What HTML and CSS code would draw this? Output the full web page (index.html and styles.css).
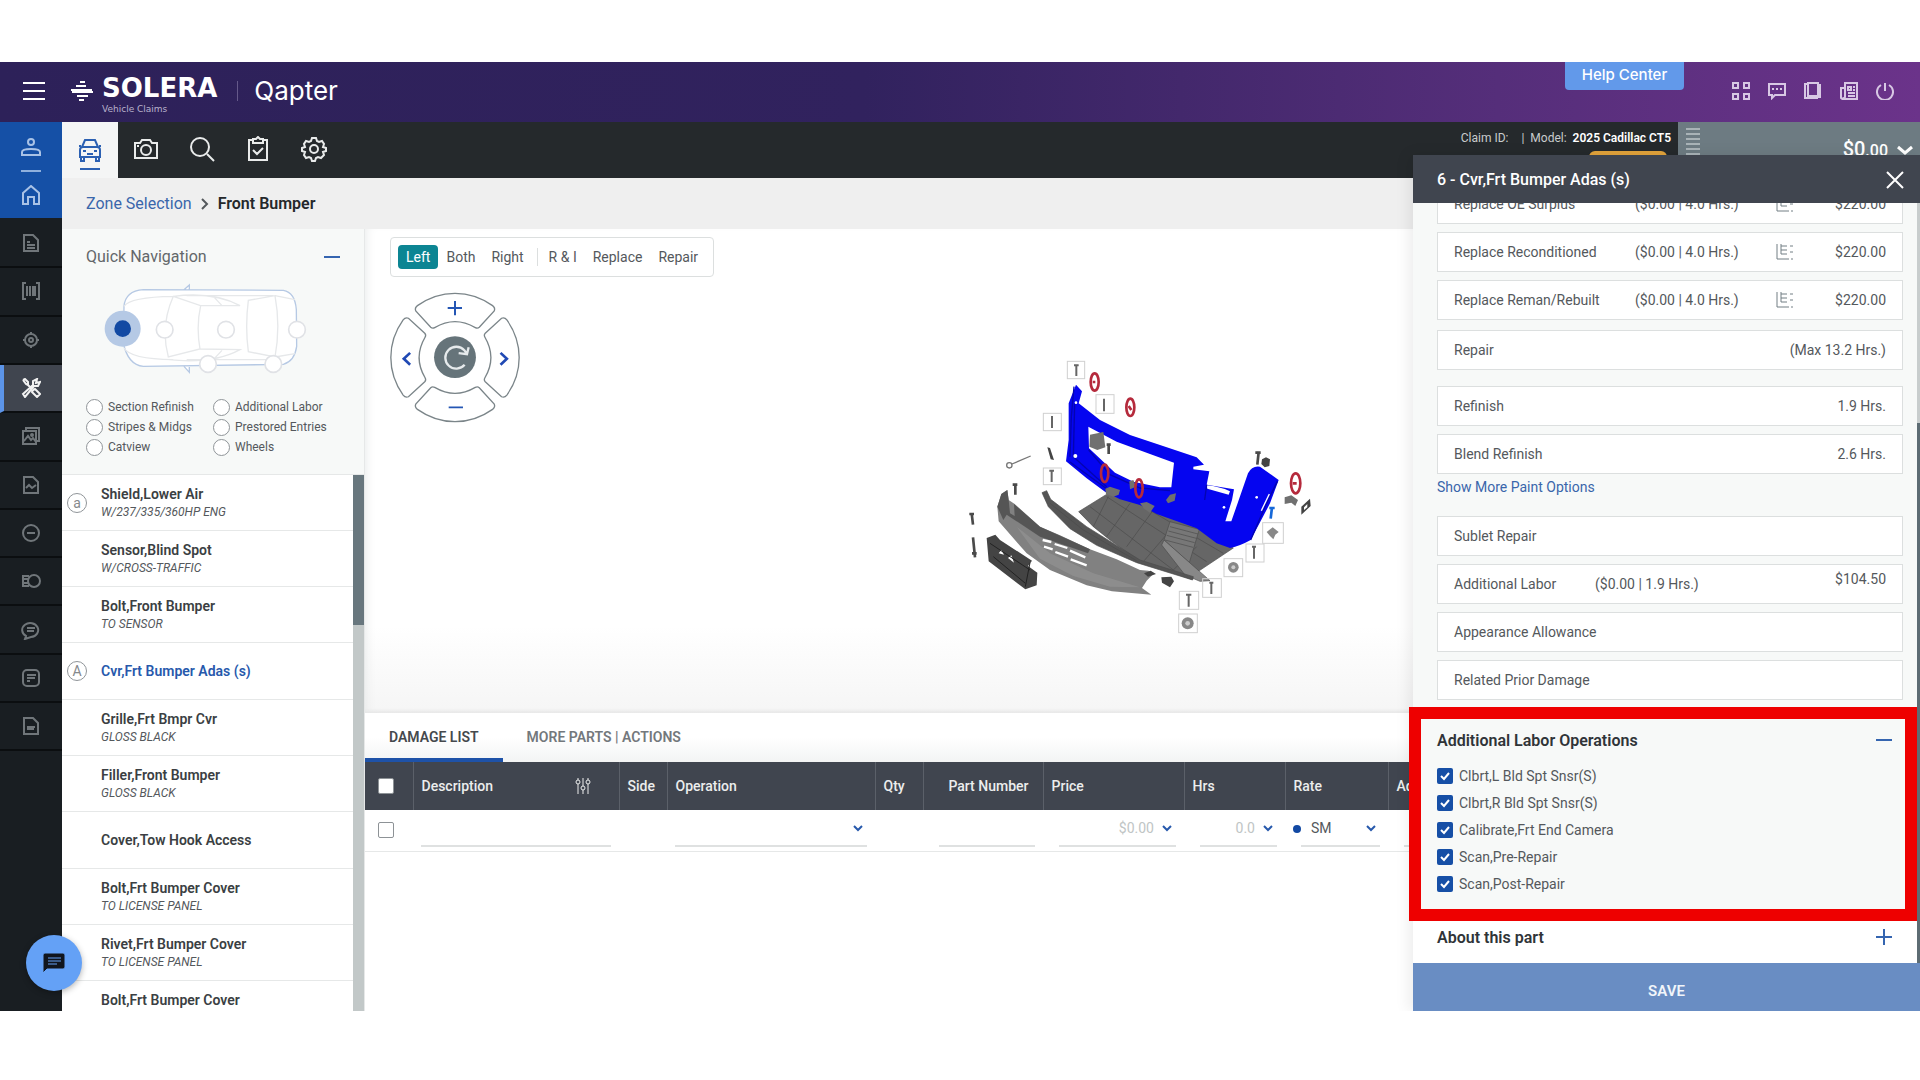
FILE: index.html
```html
<!DOCTYPE html>
<html lang="en">
<head>
    <meta charset="UTF-8">
    <meta name="viewport" content="width=device-width, initial-scale=1.0">
    <title>Solera Qapter - Front Bumper</title>
    <link rel="stylesheet" href="styles.css">
</head>
<body>
<div class="app">
    <header class="topbar">
        <button class="icon-btn menu-btn" aria-label="Menu">
            <svg width="24" height="20" viewBox="0 0 24 20"><path d="M1 2H23M1 10H23M1 18H23"/></svg>
        </button>
        <a class="brand" href="#">
            <svg class="brand-mark" width="24" height="20" viewBox="0 0 24 20"><path d="M10 1h5M6 5h10M1 9h21M2 11h21M7 15h11M9 19h5"/></svg>
            <span class="brand-name"><span>SOLERA</span><small>Vehicle Claims</small></span>
            <span class="brand-product">Qapter</span>
        </a>
        <a class="help-center" href="#">Help Center</a>
        <nav class="top-icons">
            <button class="icon-btn" aria-label="Apps"><svg width="18" height="18" viewBox="0 0 18 18"><path d="M1 1h5v5H1zM12 1h5v5h-5zM1 12h5v5H1zM12 12h5v5h-5z"/></svg></button>
            <button class="icon-btn" aria-label="Messages"><svg width="18" height="18" viewBox="0 0 18 18"><path d="M1 2h16v11H7l-3 3v-3H1zM4 7h2M8 7h2M12 7h2"/></svg></button>
            <button class="icon-btn" aria-label="Library"><svg width="18" height="18" viewBox="0 0 18 18"><path d="M4 1h10v13H4zM4 2H1v14h12v-2M14 3h2v12h-3"/></svg></button>
            <button class="icon-btn" aria-label="News"><svg width="18" height="18" viewBox="0 0 18 18"><path d="M5 1h12v16H3l2-2zM5 6H1v10l2 1M8 5h3v3H8zM13 5h2M13 8h2M8 11h7M8 14h7"/></svg></button>
            <button class="icon-btn" aria-label="Log out"><svg width="18" height="18" viewBox="0 0 18 18"><path d="M9 1V9M5 3A8 8 0 1 0 13 3"/></svg></button>
        </nav>
    </header>

    <div class="workspace">
        <aside class="rail">
            <div class="rail-head">
                <a href="#" aria-label="Profile"><svg width="20" height="20" viewBox="0 0 20 20"><circle cx="10" cy="5" r="3"/><path d="M1 18v-3q0-3 9-3t9 3v3z"/></svg></a>
                <span class="rail-line"></span>
                <a href="#" aria-label="Home"><svg width="20" height="20" viewBox="0 0 20 20"><path d="M2 8L10 1l8 7v11h-5v-7H7v7H2z"/></svg></a>
            </div>
            <nav class="rail-list">
                <a href="#" aria-label="Document"><svg width="18" height="20" viewBox="0 0 18 20"><path d="M2 2h9l5 5v11H2zM5 9h3M5 12h8M5 15h8"/></svg></a>
                <a href="#" aria-label="VIN"><svg width="20" height="20" viewBox="0 0 20 20"><path d="M5 2H2v16h3M15 2h3v16h-3M6 5v10M9 5v10M12 5v10M14 5v10"/></svg></a>
                <a href="#" aria-label="Target"><svg width="18" height="18" viewBox="0 0 18 18"><circle cx="9" cy="9" r="6"/><circle cx="9" cy="9" r="2"/><path d="M9 1v3M9 14v3M1 9h3M14 9h3"/></svg></a>
                <a href="#" class="active" aria-label="Damage capture"><svg width="20" height="20" viewBox="0 0 20 20"><path d="M2 2l2-1 3 3v3l4 4M2 2l3 4 2 1M12 12l2-1 5 5-3 3-5-5 1-2M2 16L12 7V3l4-2-1 4 4-1-2 4h-4L4 19z"/></svg></a>
                <a href="#" aria-label="Images"><svg width="20" height="20" viewBox="0 0 20 20"><path d="M2 5h13v13H2zM5 5V2h13v13h-3M3 15l4-5 3 4 2-2 3 4"/><circle cx="11" cy="9" r="1"/></svg></a>
                <a href="#" aria-label="Report"><svg width="18" height="20" viewBox="0 0 18 20"><path d="M2 2h9l5 5v11H2zM4 13l3-3 3 3 4-3"/></svg></a>
                <a href="#" aria-label="Exclusions"><svg width="20" height="20" viewBox="0 0 20 20"><circle cx="10" cy="10" r="8"/><path d="M6 10h8"/></svg></a>
                <a href="#" aria-label="Costs"><svg width="20" height="20" viewBox="0 0 20 20"><circle cx="13" cy="10" r="6"/><path d="M8 5H2v10h6M2 8h5M2 12h5"/></svg></a>
                <a href="#" aria-label="Comments"><svg width="20" height="20" viewBox="0 0 20 20"><path d="M5 16a8 7 0 1 1 5 1l-6 2zM6 8h8M6 11h7"/></svg></a>
                <a href="#" aria-label="Notes"><svg width="20" height="20" viewBox="0 0 20 20"><rect x="2" y="2" width="16" height="16" rx="4"/><path d="M6 7h9M6 10h8M6 13h3"/></svg></a>
                <a href="#" aria-label="PDF"><svg width="18" height="20" viewBox="0 0 18 20"><path d="M2 2h9l5 5v11H2zM5 11h8M5 13h7"/></svg></a>
            </nav>
        </aside>

        <div class="content">
            <nav class="toolbar">
                <a class="tool active" href="#" aria-label="Vehicle"><svg width="24" height="24" viewBox="0 0 24 24"><path d="M4 9L7 2h10l3 7M2 12q0-3 3-3h14q3 0 3 3v7H2zM3 19v4h3v-4M18 19v4h3v-4M1 8h2M21 8h2M5 13h3M16 13h3M9 16h6"/></svg></a>
                <a class="tool" href="#" aria-label="Camera"><svg width="26" height="22" viewBox="0 0 26 22"><path d="M2 5h5l2-3h8l2 3h5v15H2z"/><circle cx="13" cy="12" r="5"/><path d="M4 8h2"/></svg></a>
                <a class="tool" href="#" aria-label="Search"><svg width="26" height="26" viewBox="0 0 26 26"><circle cx="11" cy="11" r="9"/><path d="M18 18l7 7"/></svg></a>
                <a class="tool" href="#" aria-label="Checklist"><svg width="22" height="26" viewBox="0 0 22 26"><path d="M6 4H2v20h18V4h-4M6 3h3l2-2 2 2h3v4H6zM6 14l4 4 6-6"/></svg></a>
                <a class="tool" href="#" aria-label="Settings"><svg width="26" height="26" viewBox="0 0 26 26"><path d="M11 2h4l1 3 2 1 3-1 2 3-1 3 3 1v3l-3 1 1 3-3 3-3-1-2 1-1 3h-3l-1-3-2-1-3 1-2-3 1-3-3-1v-3l3-1-1-3 2-3 3 1 2-1z"/><circle cx="13" cy="13" r="4"/></svg></a>
                <div class="claim">
                    <p>Claim ID: <span class="claim-model">|&nbsp; Model:</span>&nbsp; <b>2025 Cadillac CT5</b></p>
                    <span class="claim-badge"></span>
                </div>
                <div class="total">
                    <span class="total-grip"></span>
                    <span class="total-value">$0<small>.00</small></span>
                    <svg width="18" height="12" viewBox="0 0 18 12"><path d="M2 3l7 6 7-6"/></svg>
                </div>
            </nav>

            <nav class="breadcrumb">
                <a href="#">Zone Selection</a>
                <svg width="8" height="12" viewBox="0 0 8 12"><path d="M1 1l5 5-5 5"/></svg>
                <span>Front Bumper</span>
            </nav>

            <div class="columns">
                <section class="parts-panel">
                    <div class="quick-nav">
                        <div class="quick-head">
                            <h2>Quick Navigation</h2>
                            <button class="icon-btn toggle" aria-label="Collapse"><svg width="18" height="18" viewBox="0 0 18 18"><path d="M1 9h16"/></svg></button>
                        </div>
                        <!-- top view of the vehicle with its zones -->
                        <svg class="car-map" width="204" height="92" viewBox="312 700 612 276">
                            <path class="car-body" d="M372 770Q376 724 430 720L850 722Q885 728 889 780L890 890Q884 934 850 944L430 950Q384 946 370 880zM552 720l16-14v16M552 950l16 18v-16"/>
                            <path class="car-lines" d="M372 770Q390 742 520 740M372 895Q390 928 520 930M520 740Q480 830 505 922L600 898Q588 830 602 768zM520 740Q640 725 720 768L602 768M505 930Q640 944 720 900L600 898M640 740l26 28M640 930l26-28M745 752Q735 830 745 906L825 922Q842 830 825 738zM825 738l60 12M825 922l60-10M560 738h260M560 930h260"/>
                            <g class="zones"><circle cx="494" cy="840" r="25"/><circle cx="678" cy="840" r="25"/><circle cx="891" cy="840" r="25"/><circle cx="624" cy="943" r="25"/><circle cx="820" cy="943" r="25"/></g>
                            <circle class="zone-halo" cx="368" cy="837" r="54"/>
                            <circle class="zone-dot" cx="368" cy="837" r="25"/>
                        </svg>
                        <div class="quick-options">
                            <label><input type="radio" name="quick"> Section Refinish</label>
                            <label><input type="radio" name="quick"> Additional Labor</label>
                            <label><input type="radio" name="quick"> Stripes &amp; Midgs</label>
                            <label><input type="radio" name="quick"> Prestored Entries</label>
                            <label><input type="radio" name="quick"> Catview</label>
                            <label><input type="radio" name="quick"> Wheels</label>
                        </div>
                    </div>
                    <div class="parts">
                        <ul class="parts-list">
                            <li><span class="mark">a</span><b>Shield,Lower Air</b><i>W/237/335/360HP ENG</i></li>
                            <li><b>Sensor,Blind Spot</b><i>W/CROSS-TRAFFIC</i></li>
                            <li><b>Bolt,Front Bumper</b><i>TO SENSOR</i></li>
                            <li class="single selected"><span class="mark">A</span><b>Cvr,Frt Bumper Adas (s)</b></li>
                            <li><b>Grille,Frt Bmpr Cvr</b><i>GLOSS BLACK</i></li>
                            <li><b>Filler,Front Bumper</b><i>GLOSS BLACK</i></li>
                            <li class="single"><b>Cover,Tow Hook Access</b></li>
                            <li><b>Bolt,Frt Bumper Cover</b><i>TO LICENSE PANEL</i></li>
                            <li><b>Rivet,Frt Bumper Cover</b><i>TO LICENSE PANEL</i></li>
                            <li><b>Bolt,Frt Bumper Cover</b></li>
                        </ul>
                        <div class="parts-scroll"><span></span></div>
                    </div>
                </section>

                <main class="main">
                    <section class="stage">
                        <div class="stage-tools">
                            <div class="segments">
                                <button class="on">Left</button>
                                <button>Both</button>
                                <button>Right</button>
                                <span class="segments-sep"></span>
                                <button>R &amp; I</button>
                                <button>Replace</button>
                                <button>Repair</button>
                            </div>
                            <svg class="dial" width="130" height="131" viewBox="88 216 390 394">
                                <defs><path id="dial-key" d="M165 273Q161 264 170 257Q222 220 283 220Q344 220 396 257Q405 264 401 273L356 322Q351 327 344 323Q283 287 222 323Q215 327 210 322z"/></defs>
                                <g class="dial-keys">
                                    <use href="#dial-key"/>
                                    <use href="#dial-key" transform="rotate(90 283 413)"/>
                                    <use href="#dial-key" transform="rotate(180 283 413)"/>
                                    <use href="#dial-key" transform="rotate(270 283 413)"/>
                                </g>
                                <path class="dial-signs" d="M261 264h43M283 243v43M264 563h43"/>
                                <path class="dial-arrows" d="M148 399l-19 18 19 18M420 399l19 18-19 18"/>
                                <circle class="dial-center" cx="283" cy="412" r="63"/>
                                <path class="dial-turn" d="M312 435A33 33 0 1 1 311 391L319 402M324 382L319 403 294 400"/>
                            </svg>
                        </div>

                        <!-- exploded view of the front bumper -->
                        <svg class="exploded" width="400" height="310" viewBox="0 0 1200 930" role="img" aria-label="Front bumper parts">
                            <g class="tray">
                                <path fill="#666" d="M416 515L508 458 540 466 650 500 780 560 880 624 775 694 740 690 755 718 600 665 510 600 460 560z"/>
                                <path d="M505 470L460 560M570 490L500 590M640 510L560 620M700 560L610 665M770 620L700 690M450 500L700 690M500 470L800 665M560 470L850 640"/>
                                <path fill="#777" d="M690 545L778 568 748 668 672 600z"/>
                                <path d="M690 560l84 22M685 573l84 22M680 586l84 22M675 600l84 22"/>
                                <path fill="#888" d="M672 600L810 722 780 724 735 705 665 615z"/>
                                <path fill="#555" d="M306 458L320 452 332 478 440 560 600 660 760 710 758 720 590 668 470 616 390 566 325 500z"/>
                                <path d="M330 490L430 570 590 662"/>
                            </g>
                            <g class="cover">
                                <path d="M408 134L426 154 416 190 480 240 570 285 660 315 770 352 792 374 760 380 760 388 808 394 800 434 882 448 876 480 856 544 874 544 924 400Q936 376 960 380L1016 420 990 490 932 600Q900 618 870 624L830 610 770 565 650 522 600 495 540 478 495 455 440 415 378 364 386 300 386 190z"/>
                                <path fill="#fff" d="M445 260L530 305 630 342 702 368 694 442 660 442 580 425 525 398 447 325z"/>
                                <path fill="#fff" d="M800 436Q840 440 870 454L866 464 802 446z"/>
                                <path class="shade" d="M404 190L400 350 500 440M446 330L510 404 600 444 690 452M390 366L500 446M800 434L794 480M932 600L975 500 1012 424M402 140l-8 90-4 120"/>
                                <path stroke="#fff" stroke-width="4" d="M988 462l-24 50"/>
                                <g fill="#fff"><circle cx="406" cy="348" r="6"/><circle cx="852" cy="502" r="4"/><circle cx="950" cy="472" r="4"/><circle cx="408" cy="188" r="4"/></g>
                            </g>
                            <g class="valance">
                                <path fill="#818181" d="M172 500L184 462 202 450 206 480 224 492 300 560 360 586 450 628 530 658 600 690 625 692 642 700 620 722 606 744 634 764 516 754 440 736 330 690 260 640 176 544z"/>
                                <path fill="#555" d="M172 500L184 462 202 450 206 480 210 520 224 528 222 492 300 560 450 628 444 640 300 590 200 524 190 540z"/>
                                <path fill="#999" d="M230 560L330 640 460 700 600 742 510 740 400 708 300 656z" opacity=".5"/>
                                <path class="slots" d="M308 600L334 606M344 612L382 624M390 632L436 652M312 620L338 628M346 636L384 650M392 658L440 676"/>
                                <path fill="#444" d="M140 594L166 584 180 600 276 662 264 678 292 698 290 736 256 748 146 664z"/>
                                <path fill="#fff" d="M176 640l8-10 8 14zM204 654l10-8 8 22z"/>
                                <path class="shade" d="M150 610L270 690M160 650L256 730M270 668L256 740"/>
                                <path fill="#444" d="M664 712l30-2 8 14-12 18-24-14zM612 700l20-8 16 10-24 8z"/>
                            </g>
                            <g class="clips">
                                <path d="M450 284l40-8 6 46-24 8-24-10z"/><path d="M496 446l14-6 30 10-4 14-16 6-22-8zM600 490l20-4 24 12-14 20-18-12z"/>
                                <path d="M690 464l18-4-4 22-20 8-6-10zM568 424l12-4 8 20-18 8zM1034 472l20-6 20 14-8 18-12-10-20 4z"/>
                                <path fill="#444" d="M1084 500l26-24 2 22-28 26zM966 358l12-6 12 6-2 20-14 4-10-10zM322 322l8 2 12 36-10-2z"/>
                                <path fill="#fff" d="M1092 502l10-10v10l-10 8z"/>
                            </g>
                            <g class="bolts">
                                <path d="M506 312v30M226 432v32M956 336l-4 38M95 520l4 34M99 592l6 60"/><path d="M500 314h12M218 434h14M946 338h16M88 522h14M96 640h14"/>
                                <path class="hook" d="M216 372L272 348"/><circle class="hook" cx="208" cy="376" r="8"/>
                                <path stroke="#1668d8" d="M996 502l-4 34M988 504h16"/>
                            </g>
                            <g class="tags">
                                <rect x="382" y="64" width="52" height="52"/><rect x="468" y="164" width="54" height="56"/><rect x="310" y="220" width="54" height="52"/><rect x="310" y="384" width="54" height="50"/>
                                <rect x="968" y="548" width="62" height="62"/><rect x="918" y="612" width="54" height="54"/><rect x="852" y="656" width="56" height="54"/><rect x="788" y="716" width="56" height="56"/><rect x="718" y="754" width="58" height="54"/><rect x="716" y="822" width="56" height="56"/>
                            </g>
                            <g class="bolts small">
                                <path d="M402 76h14M409 76v32M336 228v36M328 392h14M335 392v34M492 176v38M936 620h12M942 620v36M808 728h12M814 728v34M738 764h16M746 764v36"/>
                            </g>
                            <g fill="#888"><circle cx="880" cy="682" r="16"/><circle cx="743" cy="850" r="18"/><path d="M980 576l18-14 18 14-10 8-6 14-10-10z"/></g>
                            <g fill="#ccc"><circle cx="880" cy="682" r="6"/><circle cx="743" cy="850" r="7"/></g>
                            <g class="rings">
                                <ellipse cx="464" cy="126" rx="12" ry="26"/><ellipse cx="571" cy="202" rx="12" ry="26"/><ellipse cx="1067" cy="430" rx="14" ry="30"/><ellipse cx="494" cy="400" rx="11" ry="26"/><ellipse cx="597" cy="445" rx="11" ry="27"/>
                                <path d="M458 126h8M566 198l8 12M1058 430h12"/>
                            </g>
                        </svg>
                    </section>

                    <section class="damage">
                        <div class="tabs">
                            <a class="on" href="#">DAMAGE LIST</a>
                            <a href="#">MORE PARTS | ACTIONS</a>
                        </div>
                        <table class="damage-table">
                            <colgroup>
                                <col class="w-check"><col class="w-desc"><col class="w-small"><col class="w-oper"><col class="w-small"><col class="w-part"><col class="w-price"><col class="w-hrs"><col class="w-rate"><col>
                            </colgroup>
                            <thead>
                                <tr>
                                    <th><input type="checkbox" class="all" aria-label="Select all"></th>
                                    <th><span class="th-desc">Description <svg width="16" height="18" viewBox="0 0 16 18"><path d="M3 1v2M3 7v10M8 1v8M8 13v4M13 1v2M13 7v10"/><circle cx="3" cy="5" r="2"/><circle cx="8" cy="11" r="2"/><circle cx="13" cy="5" r="2"/></svg></span></th>
                                    <th>Side</th>
                                    <th>Operation</th>
                                    <th>Qty</th>
                                    <th class="right">Part Number</th>
                                    <th>Price</th>
                                    <th>Hrs</th>
                                    <th>Rate</th>
                                    <th>Adj</th>
                                </tr>
                            </thead>
                            <tbody>
                                <tr>
                                    <td><input type="checkbox" aria-label="Select row"></td>
                                    <td><input type="text" aria-label="Description"></td>
                                    <td></td>
                                    <td><select aria-label="Operation"><option></option></select></td>
                                    <td></td>
                                    <td class="inset"><input type="text" aria-label="Part number"></td>
                                    <td class="inset"><select class="muted" aria-label="Price"><option>$0.00</option></select></td>
                                    <td class="inset"><select class="muted" aria-label="Hours"><option>0.0</option></select></td>
                                    <td><span class="rate"><span class="rate-dot"></span><select aria-label="Rate"><option>SM</option></select></span></td>
                                    <td class="inset"><input type="text" aria-label="Adjustment"></td>
                                </tr>
                            </tbody>
                        </table>
                    </section>
                </main>
            </div>
        </div>
    </div>

    <aside class="drawer">
        <header class="drawer-head">
            <h2>6 - Cvr,Frt Bumper Adas (s)</h2>
            <button class="icon-btn" aria-label="Close"><svg width="18" height="18" viewBox="0 0 18 18"><path d="M1 1l16 16M17 1L1 17"/></svg></button>
        </header>
        <div class="drawer-body">
            <div class="drawer-content">
                <ul class="ops ops-replace">
                    <li><span class="op-name">Replace OE Surplus</span><span class="op-detail">($0.00 | 4.0 Hrs.)</span><svg width="18" height="18" viewBox="0 0 18 18"><path d="M1 1v15h12M5 1v10h6M5 3h6M5 7h6M14 3h3M14 9h3M15 16h2"/></svg><span class="op-value">$220.00</span></li>
                    <li><span class="op-name">Replace Reconditioned</span><span class="op-detail">($0.00 | 4.0 Hrs.)</span><svg width="18" height="18" viewBox="0 0 18 18"><path d="M1 1v15h12M5 1v10h6M5 3h6M5 7h6M14 3h3M14 9h3M15 16h2"/></svg><span class="op-value">$220.00</span></li>
                    <li><span class="op-name">Replace Reman/Rebuilt</span><span class="op-detail">($0.00 | 4.0 Hrs.)</span><svg width="18" height="18" viewBox="0 0 18 18"><path d="M1 1v15h12M5 1v10h6M5 3h6M5 7h6M14 3h3M14 9h3M15 16h2"/></svg><span class="op-value">$220.00</span></li>
                </ul>
                <ul class="ops ops-repair">
                    <li><span class="op-name">Repair</span><span class="op-value">(Max 13.2 Hrs.)</span></li>
                </ul>
                <ul class="ops ops-paint">
                    <li><span class="op-name">Refinish</span><span class="op-value">1.9 Hrs.</span></li>
                    <li><span class="op-name">Blend Refinish</span><span class="op-value">2.6 Hrs.</span></li>
                </ul>
                <a class="more-paint" href="#">Show More Paint Options</a>
                <ul class="ops">
                    <li><span class="op-name">Sublet Repair</span></li>
                    <li><span class="op-name narrow">Additional Labor</span><span class="op-detail">($0.00 | 1.9 Hrs.)</span><span class="op-value top">$104.50</span></li>
                    <li><span class="op-name">Appearance Allowance</span></li>
                    <li><span class="op-name">Related Prior Damage</span></li>
                </ul>

                <section class="labor-ops">
                    <div class="section-head">
                        <h3>Additional Labor Operations</h3>
                        <button class="icon-btn toggle" aria-label="Collapse"><svg width="18" height="18" viewBox="0 0 18 18"><path d="M1 9h16"/></svg></button>
                    </div>
                    <label><input type="checkbox" checked> Clbrt,L Bld Spt Snsr(S)</label>
                    <label><input type="checkbox" checked> Clbrt,R Bld Spt Snsr(S)</label>
                    <label><input type="checkbox" checked> Calibrate,Frt End Camera</label>
                    <label><input type="checkbox" checked> Scan,Pre-Repair</label>
                    <label><input type="checkbox" checked> Scan,Post-Repair</label>
                </section>
                <section class="about">
                    <div class="section-head">
                        <h3>About this part</h3>
                        <button class="icon-btn toggle" aria-label="Expand"><svg width="18" height="18" viewBox="0 0 18 18"><path d="M1 9h16M9 1v16"/></svg></button>
                    </div>
                </section>
            </div>
            <div class="drawer-scroll"><span></span></div>
        </div>
        <button class="save">SAVE</button>
    </aside>

    <button class="chat" aria-label="Chat">
        <svg width="24" height="22" viewBox="0 0 24 22"><path fill="#10151d" d="M3 1h18q2 0 2 2v12q0 2-2 2H5l-4 4V3q0-2 2-2z"/><path d="M6 6h13M6 9h13M6 12h9"/></svg>
    </button>
</div>
</body>
</html>
```
FILE: styles.css
```css
:root {
    --blue: #164fa6;
    --link: #3a66ab;
    --slate: #40454f;
    --text: #54585c;
    --dark: #303438;
    --line: #dcdfdf;
    --panel: #f7f9f8;
}
* { box-sizing: border-box; }
body { margin: 0; padding: 62px 0 69px; height: 100vh; background: #fff; color: var(--text); font-family: Roboto, "Liberation Sans", sans-serif; font-size: 14px; line-height: 20px; }
h2, h3, p, ul { margin: 0; padding: 0; }
ul { list-style: none; }
a { color: inherit; text-decoration: none; }
button, input, select { font: inherit; color: inherit; }
svg { display: block; flex: none; fill: none; stroke: currentColor; stroke-width: 2; }
.icon-btn { display: flex; padding: 0; border: 0; background: none; cursor: pointer; }
.toggle { color: #3565b0; }

.app { position: relative; display: flex; flex-direction: column; height: 100%; overflow: hidden; }

/* Top bar */
.topbar { flex: none; display: flex; align-items: center; height: 60px; padding: 0 26px 2px 22px; background: linear-gradient(90deg, #2d2159 0%, #31225e 45%, #552e7a 78%, #6b338a 100%); color: #fff; }
.brand { display: flex; align-items: center; margin-left: 24px; }
.brand-name { display: flex; flex-direction: column; margin: 6px 20px 0 8px; font-family: "DejaVu Sans", sans-serif; font-size: 26px; font-weight: bold; line-height: 30px; }
.brand-name small { font-size: 9px; font-weight: normal; line-height: 12px; color: #b9b2cc; }
.brand-product { padding-left: 16px; border-left: 1px solid #65598a; font-family: Inter, sans-serif; font-size: 26px; line-height: 20px; }
.help-center { align-self: flex-start; width: 119px; margin-left: auto; padding-bottom: 2px; border-radius: 0 0 4px 4px; background: #6299ea; font-family: Inter, sans-serif; font-size: 15px; font-weight: 500; line-height: 26px; text-align: center; }
.top-icons { display: flex; gap: 18px; margin-left: 48px; color: #d8c8e4; }

.workspace { flex: 1; display: flex; min-height: 0; }

/* Left rail */
.rail { flex: none; display: flex; flex-direction: column; width: 62px; background: #191e22; }
.rail-head { display: flex; flex-direction: column; align-items: center; justify-content: space-between; height: 96px; padding: 15px 0 13px; background: #1550a6; color: #a9c2e6; }
.rail-line { width: 20px; height: 2px; background: #8fb0dd; }
.rail-list { flex: 0 0 60%; display: grid; grid-auto-rows: 1fr; padding-top: 2px; }
.rail-list a { display: flex; align-items: center; justify-content: center; border-bottom: 2px solid #0b0e10; color: #70767a; }
.rail-list .active { border-left: 4px solid #5c94e8; padding-right: 4px; background: var(--slate); color: #f2f2f2; }

.content { flex: 1; display: flex; flex-direction: column; min-width: 0; }

/* Toolbar */
.toolbar { flex: none; display: flex; height: 56px; background: #25292c; color: #e9ebeb; }
.tool { display: flex; align-items: center; justify-content: center; width: 56px; padding-bottom: 3px; }
.tool.active { flex-direction: column; gap: 6px; padding: 8px 0 0; background: #f4f5f5; color: #2b60b2; }
.tool.active::after { content: ""; width: 20px; height: 2px; background: #2b60b2; }
.claim { display: flex; flex-direction: column; align-items: flex-end; margin-left: auto; padding: 6px 7px 0 0; font-size: 12px; color: #c9cccd; }
.claim-model { margin-left: 10px; }
.claim b { color: #fff; font-weight: 600; }
.claim-badge { width: 78px; height: 18px; margin: 3px 4px 0 0; border-radius: 6px; background: #e2a33b; }
.total { display: flex; align-items: center; width: 242px; padding: 0 6px 0 8px; background: #6d7b82; color: #fff; }
.total svg { stroke-width: 3; }
.total-grip { width: 14px; height: 44px; background: repeating-linear-gradient(#a9b3b7 0 2px, #6d7b82 2px 5px); }
.total-value { margin: 0 8px 0 auto; font-size: 20px; font-weight: 500; }
.total-value small { font-size: 16px; }

/* Breadcrumb */
.breadcrumb { flex: none; display: flex; align-items: center; gap: 9px; height: 51px; padding-left: 24px; background: #efefef; font-size: 16px; }
.breadcrumb a { color: var(--link); }
.breadcrumb span { color: #25282b; font-weight: 600; }

.columns { flex: 1; display: flex; min-height: 0; }

/* Quick navigation and parts list */
.parts-panel { flex: none; display: flex; flex-direction: column; width: 303px; border-right: 1px solid #e6e8e8; background: var(--panel); }
.quick-nav { flex: none; height: 245px; padding: 18px 23px 0 24px; }
.quick-head { display: flex; align-items: center; justify-content: space-between; }
.quick-head h2 { font-size: 16px; font-weight: 400; color: #63676a; }
.car-map { margin: 16px 0 0 18px; }
.car-body { fill: #fff; stroke: #b6c9e4; stroke-width: 4; }
.car-lines { stroke: #e6e8ea; stroke-width: 4; }
.zones { fill: #fff; stroke: #e0e2e6; stroke-width: 5; }
.zone-halo { fill: #b5c9e5; stroke: none; }
.zone-dot { fill: #1249a3; stroke: none; }
.quick-options { display: grid; grid-template-columns: 127px 1fr; margin: 22px -8px 0 0; }
.quick-options label { display: flex; align-items: center; gap: 5px; font-size: 12px; }
.quick-options input { appearance: none; width: 17px; height: 17px; margin: 0; border: 1px solid #909599; border-radius: 50%; background: #fff; }
.parts { flex: 1; display: flex; min-height: 0; border-top: 1px solid #e6e8e8; }
.parts-list { flex: 1; overflow: hidden; background: #fff; }
.parts-list li { position: relative; padding: 10px 0 9px 39px; border-bottom: 1px solid #e6e8e8; line-height: 18px; }
.parts-list .single { padding: 19px 0 19px 39px; }
.parts-list b { display: block; color: #3b3f43; font-weight: 600; }
.parts-list i { display: block; font-size: 12px; }
.parts-list .selected b { color: #2759ac; }
.mark { position: absolute; left: 5px; top: 18px; width: 20px; height: 20px; border: 1px solid #909599; border-radius: 50%; color: #85898c; text-align: center; }
.parts-scroll { width: 11px; background: #c2c8c8; }
.parts-scroll span { display: block; height: 28%; background: #68777e; }

.main { flex: 1; display: flex; flex-direction: column; min-width: 0; }

/* Bumper view: tools and drawing share one grid cell */
.stage { flex: 1; display: grid; min-height: 0; background: linear-gradient(#fff 82%, #f6f6f6 99%, #e8e8e8 100%); box-shadow: inset 8px 0 12px -8px #e4e7e7; }
.stage-tools { grid-area: 1 / 1; justify-self: start; padding: 8px 25px; }
.segments { display: flex; align-items: center; gap: 16px; height: 40px; padding: 0 15px 0 7px; border: 1px solid var(--line); border-radius: 4px; background: #fff; }
.segments button { padding: 0; border: 0; background: none; line-height: 24px; }
.segments .on { margin-right: -8px; padding: 0 8px; border-radius: 4px; background: #0c8593; color: #fff; }
.segments-sep { width: 1px; height: 18px; margin: 0 -5px 0 -3px; background: var(--line); }
.dial { margin-top: 15px; }
.dial-keys { fill: #fff; stroke: #7b8589; stroke-width: 4; }
.dial-signs { stroke: #2456b4; stroke-width: 6; }
.dial-arrows { stroke: #2049b4; stroke-width: 8; }
.dial-center { fill: #66747a; stroke: none; }
.dial-turn { stroke: #e6eaec; stroke-width: 7; }
.exploded { grid-area: 1 / 1; place-self: center; margin: 48px 6px 0 0; stroke: none; }
.tray { stroke: #4b4b4b; stroke-width: 2; }
.cover { fill: #0505f0; }
.cover .shade { fill: none; stroke: #0404b0; stroke-width: 4; }
.valance .slots { stroke: #fff; stroke-width: 7; }
.valance .shade { stroke: #222; stroke-width: 3; }
.clips { fill: #707070; }
.bolts { stroke: #4a4a4a; stroke-width: 8; }
.bolts .hook { stroke: #777; stroke-width: 4; }
.bolts.small { stroke: #666; stroke-width: 6; }
.tags { fill: none; stroke: #d0d0d0; stroke-width: 3; }
.rings { stroke: #b52a3c; stroke-width: 8; }

/* Damage list */
.damage { flex: none; height: 298px; }
.tabs { display: flex; height: 49px; background: linear-gradient(#fff 50%, #f3f4f4); }
.tabs a { padding: 14px 24px 0; color: #73787c; font-weight: 600; }
.tabs .on { border-bottom: 4px solid #1e52a8; color: #45494d; }
.damage-table { width: 100%; table-layout: fixed; border-collapse: collapse; }
.w-check { width: 48px; }
.w-desc { width: 206px; }
.w-small { width: 48px; }
.w-oper { width: 208px; }
.w-part { width: 120px; }
.w-price { width: 141px; }
.w-hrs { width: 101px; }
.w-rate { width: 103px; }
.damage-table th { height: 48px; padding: 0 8px; border-right: 1px solid #5b6069; background: var(--slate); color: #eceded; font-weight: 500; text-align: left; }
.damage-table .right { padding-right: 14px; text-align: right; }
.damage-table td { height: 41px; padding: 0 8px 3px; border-bottom: 1px solid #e6e8e8; }
.damage-table .inset { padding-left: 16px; }
.damage-table th:first-child, .damage-table td:first-child { padding-left: 13px; }
.damage-table td:first-child { padding-bottom: 0; }
.th-desc { display: flex; align-items: center; justify-content: space-between; padding-right: 20px; }
.th-desc svg { stroke-width: 1; }
.damage-table input[type="text"], .damage-table select { display: block; width: 100%; height: 36px; padding: 0; border: 0; border-bottom: 2px solid #dfe1e1; border-radius: 0; background-color: transparent; outline: 0; }
.damage-table select { appearance: none; padding-right: 22px; background: url("data:image/svg+xml,%3Csvg xmlns='http://www.w3.org/2000/svg' width='10' height='8'%3E%3Cpath d='M1 2l4 4 4-4' fill='none' stroke='%232759ac' stroke-width='2'/%3E%3C/svg%3E") no-repeat right 4px center; }
.damage-table .muted { color: #c0c5c5; text-align-last: right; }
.damage-table input[type="checkbox"] { appearance: none; display: block; width: 16px; height: 16px; margin: 0; border: 1px solid #8d9296; border-radius: 2px; background: #fff; }
.rate { display: flex; align-items: center; }
.rate-dot { flex: none; width: 8px; height: 8px; border-radius: 50%; background: #1249a3; }
.rate select { padding-left: 10px; }

/* Part drawer */
.drawer { position: absolute; top: 93px; right: 0; bottom: 0; display: flex; flex-direction: column; width: 507px; background: var(--panel); box-shadow: -4px 0 14px rgba(0, 0, 0, 0.08); }
.drawer-head { position: relative; z-index: 1; flex: none; display: flex; align-items: center; justify-content: space-between; height: 48px; padding: 1px 16px 0 24px; background: var(--slate); color: #fff; }
.drawer-head h2 { font-size: 16px; font-weight: 500; }
.drawer-body { flex: 1; display: flex; min-height: 0; }
.drawer-content { flex: 1; display: flex; flex-direction: column; padding: 0 14px 0 24px; }
.ops { display: grid; gap: 8px; }
.ops-replace { margin-top: -19px; }
.ops-repair { margin-top: 10px; }
.ops-paint { margin-top: 16px; }
.ops li { display: flex; align-items: center; height: 40px; padding: 4px 16px; border: 1px solid var(--line); background: #fff; }
.ops svg { stroke: #727e84; stroke-width: 1; }
.op-name { flex: none; width: 181px; }
.op-name.narrow { width: 141px; }
.op-detail { flex: none; width: 141px; }
.op-value { margin-left: auto; }
.op-value.top { align-self: flex-start; }
.more-paint { margin: 3px 0 19px; color: var(--link); }
.labor-ops { position: relative; margin: 19px -2px 0 -16px; padding: 12px 12px 12px 16px; background: var(--panel); outline: 12px solid #ee0000; }
.section-head { display: flex; justify-content: space-between; color: var(--dark); }
.section-head h3 { font-size: 16px; font-weight: 600; }
.labor-ops .section-head { margin-bottom: 11px; }
.labor-ops label { display: flex; align-items: center; gap: 6px; height: 27px; }
.labor-ops input { appearance: none; width: 16px; height: 16px; margin: 0; border-radius: 2px; background: var(--blue) url("data:image/svg+xml,%3Csvg xmlns='http://www.w3.org/2000/svg' width='16' height='16'%3E%3Cpath d='M4 8l3 3 5-6' fill='none' stroke='white' stroke-width='2'/%3E%3C/svg%3E"); }
.about { flex: 1; margin: 0 -14px 0 -24px; padding: 19px 24px 0; background: #fff; }
.drawer-scroll { display: flex; flex-direction: column; justify-content: flex-end; width: 3px; background: #c8cdcd; }
.drawer-scroll span { height: 71%; background: #5d6c73; }
.save { flex: none; height: 48px; padding: 7px 0 0; border: 0; background: #698dc3; color: #f1f5fa; font-size: 15px; font-weight: 600; }

.chat { position: absolute; left: 26px; bottom: 20px; display: flex; align-items: center; justify-content: center; width: 56px; height: 56px; border: 0; border-radius: 50%; background: #64a1f6; box-shadow: 0 2px 6px rgba(0, 0, 0, 0.3); }
.chat svg { stroke: #64a1f6; stroke-width: 1; }
```
